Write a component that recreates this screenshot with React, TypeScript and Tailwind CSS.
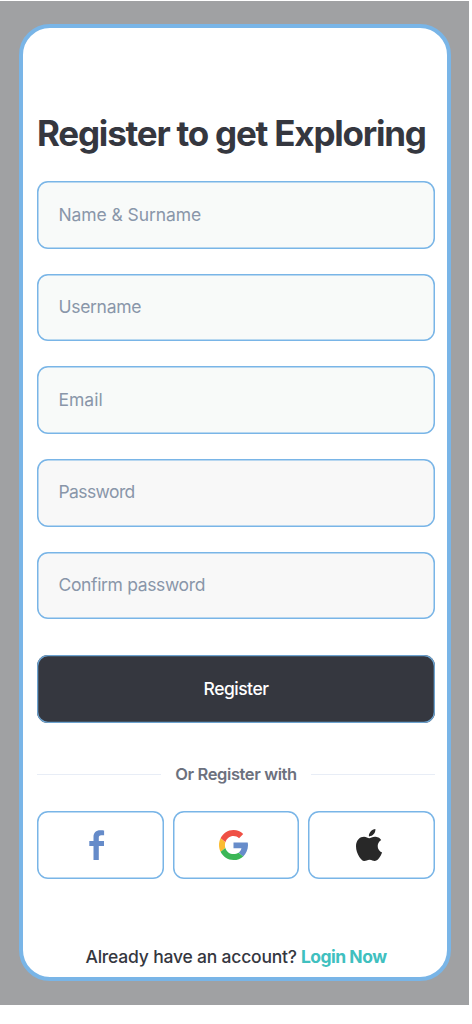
import React from 'react';

const fields = [
  { label: 'Name & Surname', type: 'text', style: 'bg-[#f8faf9] tracking-[-0.08px]' },
  { label: 'Username', type: 'text', style: 'bg-[#f8faf9] tracking-[-0.3px]' },
  { label: 'Email', type: 'email', style: 'bg-[#f8faf9] tracking-[0px]' },
  { label: 'Password', type: 'password', style: 'bg-[#f8f8f8] tracking-[-0.6px]' },
  { label: 'Confirm password', type: 'password', style: 'bg-[#f8f8f8] tracking-[-0.35px]' },
];

function FacebookIcon() {
  return (
    <svg width="16" height="30" viewBox="0 0 16 30" aria-hidden="true">
      <path
        fill="#658bc9"
        d="M4.5 30V16.1H.3V10.9h4.2V7.1C4.5 2.7 7.1.3 11.1.3c1.9 0 3.5.2 4 .2v4.8h-2.700c-2.200 0-2.600 1-2.600 2.500v3.100h5.200v5.200H9.800V30z"
      />
    </svg>
  );
}

function GoogleIcon() {
  return (
    <svg width="29" height="30" viewBox="0 0 48 48" preserveAspectRatio="none" aria-hidden="true">
      <path fill="#ef5045" d="M24 9.5c3.5 0 6.7 1.2 9.2 3.6l6.900-6.900C35.900 2.400 30.500 0 24 0 14.600 0 6.500 5.400 2.600 13.200l8 6.200C12.400 13.700 17.700 9.500 24 9.500z" />
      <path fill="#678cca" d="M47.500 20H24v9h13.200c-.6 3-2.300 5.500-4.800 7.200l7.700 6C44.600 38.100 48 32 48 24.500c0-1.500-.1-3-.5-4.500z" />
      <path fill="#fbbc32" d="M10.500 28.600C10 27.100 9.800 25.600 9.800 24s.3-3.100.7-4.600l-7.900-6.200C.9 16.500 0 20.100 0 24s.9 7.500 2.600 10.800z" />
      <path fill="#3bb656" d="M24 48c6.500 0 11.900-2.100 16.100-5.800l-7.700-6C30.200 37.600 27.400 38.500 24 38.500c-6.300 0-11.600-4.200-13.500-9.900l-7.900 6.200C6.500 42.600 14.600 48 24 48z" />
    </svg>
  );
}

function AppleIcon() {
  return (
    <svg width="26" height="32" viewBox="0 0 814 1000" preserveAspectRatio="none" aria-hidden="true">
      <path
        fill="#282828"
        d="M788.100 340.900c-5.800 4.500-108.200 62.200-108.200 190.500 0 148.400 130.300 200.900 134.200 202.200-.6 3.200-20.700 71.900-68.700 141.900-42.800 61.600-87.500 123.100-155.500 123.100s-85.500-39.500-164-39.500c-76.500 0-103.700 40.800-165.900 40.800s-105.600-57-155.500-127C46.700 790.700 0 663 0 541.800c0-194.400 126.400-297.500 250.800-297.500 66.100 0 121.200 43.400 162.700 43.400 39.500 0 101.100-46 176.300-46 28.500 0 130.900 2.600 198.300 99.200zm-234-181.500c31.100-36.900 53.100-88.100 53.100-139.300 0-7.100-.6-14.300-1.900-20.100-50.600 1.900-110.800 33.700-147.100 75.800-28.500 32.400-55.100 83.600-55.100 135.500 0 7.800 1.300 15.600 1.900 18.100 3.200.6 8.400 1.300 13.600 1.300 45.400 0 102.500-30.400 135.500-71.300z"
      />
    </svg>
  );
}

const providers = [
  { name: 'Facebook', icon: <FacebookIcon />, nudge: 'pr-[6px]' },
  { name: 'Google', icon: <GoogleIcon />, nudge: 'pr-[5px]' },
  { name: 'Apple', icon: <AppleIcon />, nudge: 'pr-[5px]' },
];

export default function App() {
  return (
    <div className="h-[1024px] w-[472px] bg-white pt-px font-[Inter,sans-serif]">
      <div className="h-[1004px] w-[468.5px] bg-[#a0a1a3] pl-[19px] pt-[23px]">
        <main className="flex h-[957px] w-[432px] flex-col rounded-[31px] border-4 border-[#79b5e7] bg-white pl-[14px] pr-[12px]">
          <h1 className="mt-[83px] h-[44px] whitespace-nowrap text-[35px] leading-[44px] font-bold tracking-[-1.22px] text-[#35373f]">
            Register to get Exploring
          </h1>
          <form className="mt-[26.3px] flex flex-col" onSubmit={(e) => e.preventDefault()}>
            <div className="flex flex-col gap-[25px]">
              {fields.map((f) => (
                <input
                  key={f.label}
                  type={f.type}
                  placeholder={f.label}
                  aria-label={f.label}
                  className={`h-[67.6px] w-full rounded-[11px] px-[21.5px] pb-[2px] text-[17.5px] text-[#35373f] shadow-[inset_0_0_0_1.5px_#79b5e7] outline-none placeholder:text-[#8996a9] ${f.style}`}
                />
              ))}
            </div>
            <button
              type="submit"
              className="mt-[36px] h-[67.5px] rounded-[11px] bg-[#35373f] text-[17.5px] font-medium tracking-[-0.5px] text-white shadow-[inset_0_0_0_1.3px_#6da3d0]"
            >
              Register
            </button>
          </form>
          <div className="mt-[40px] flex h-6 items-center justify-between">
            <span className="h-px w-[124px] bg-[#e8edf6]" />
            <span className="whitespace-nowrap text-[16.5px] font-semibold tracking-[-0.38px] text-[#6c717e]">Or Register with</span>
            <span className="h-px w-[124px] bg-[#e8edf6]" />
          </div>
          <div className="mt-[24px] grid grid-cols-3 gap-[9px]">
            {providers.map((p) => (
              <button
                key={p.name}
                aria-label={p.name}
                className={`flex h-[68px] items-center justify-center rounded-[11px] bg-white shadow-[inset_0_0_0_1.5px_#79b5e7] ${p.nudge}`}
              >
                {p.icon}
              </button>
            ))}
          </div>
          <p className="mt-[66px] flex justify-center gap-[4px] whitespace-nowrap text-[17.5px] leading-6 font-medium tracking-[-0.2px] text-[#35373f]">
            <span>Already have an account?</span>
            <a href="#login" className="font-bold tracking-[-0.5px] text-[#40c0bf]">Login Now</a>
          </p>
        </main>
      </div>
    </div>
  );
}
